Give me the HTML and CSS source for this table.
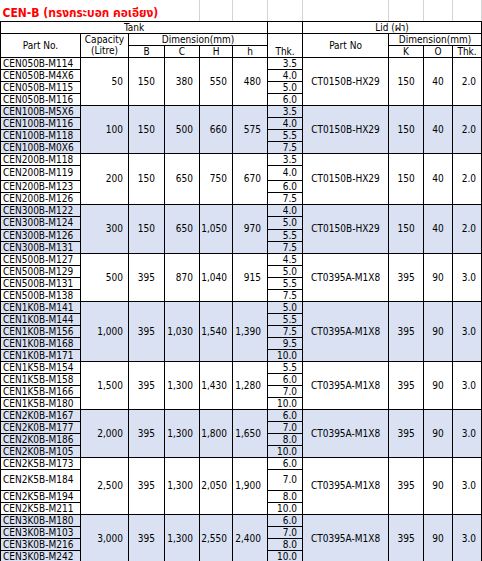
FILE: index.html
```html
<!DOCTYPE html>
<html lang="th">
<head>
<meta charset="utf-8">
<title>CEN-B</title>
<link rel="stylesheet" href="styles.css">
</head>
<body>
<table class="sheet">
<colgroup>
<col class="w-pn"><col class="w-cap"><col class="w-b"><col class="w-c"><col class="w-hh"><col class="w-h2"><col class="w-thk"><col class="w-lpn"><col class="w-k"><col class="w-o"><col class="w-lt">
</colgroup>
<thead>
<tr class="r-title">
<td class="title" colspan="4">CEN-B (ทรงกระบอก คอเอียง)</td>
<td class="grid"></td><td class="grid"></td><td class="grid"></td><td class="grid"></td><td class="grid"></td><td class="grid"></td><td class="grid"></td>
</tr>
<tr class="r12">
<td class="hd" colspan="6">Tank</td>
<td class="hd"></td>
<td class="hd" colspan="4">Lid (ฝา)</td>
</tr>
<tr class="r12">
<td class="hd" rowspan="2">Part No.</td>
<td class="hd" rowspan="2">Capacity<br>(Litre)</td>
<td class="hd" colspan="4">Dimension(mm)</td>
<td class="hd bot" rowspan="2">Thk.</td>
<td class="hd" rowspan="2">Part No</td>
<td class="hd" colspan="3">Dimension(mm)</td>
</tr>
<tr class="r12">
<td class="hd">B</td><td class="hd">C</td><td class="hd">H</td><td class="hd">h</td>
<td class="hd">K</td><td class="hd">O</td><td class="hd">Thk.</td>
</tr>
</thead>

<tbody>
<tr class="r12"><td class="pn">CEN050B-M114</td><td class="cap" rowspan="4">50</td><td class="b" rowspan="4">150</td><td class="c" rowspan="4">380</td><td class="hh" rowspan="4">550</td><td class="h2" rowspan="4">480</td><td class="thk">3.5</td><td class="lpn" rowspan="4">CT0150B-HX29</td><td class="k" rowspan="4">150</td><td class="o" rowspan="4">40</td><td class="lt" rowspan="4">2.0</td></tr>
<tr class="r12"><td class="pn">CEN050B-M4X6</td><td class="thk">4.0</td></tr>
<tr class="r12"><td class="pn">CEN050B-M115</td><td class="thk">5.0</td></tr>
<tr class="r12"><td class="pn">CEN050B-M116</td><td class="thk">6.0</td></tr>
</tbody>

<tbody class="alt">
<tr class="r12"><td class="pn">CEN100B-M5X6</td><td class="cap" rowspan="4">100</td><td class="b" rowspan="4">150</td><td class="c" rowspan="4">500</td><td class="hh" rowspan="4">660</td><td class="h2" rowspan="4">575</td><td class="thk">3.5</td><td class="lpn" rowspan="4">CT0150B-HX29</td><td class="k" rowspan="4">150</td><td class="o" rowspan="4">40</td><td class="lt" rowspan="4">2.0</td></tr>
<tr class="r12"><td class="pn">CEN100B-M116</td><td class="thk">4.0</td></tr>
<tr class="r12"><td class="pn">CEN100B-M118</td><td class="thk">5.5</td></tr>
<tr class="r12"><td class="pn">CEN100B-M0X6</td><td class="thk">7.5</td></tr>
</tbody>

<tbody>
<tr class="r12"><td class="pn">CEN200B-M118</td><td class="cap" rowspan="4">200</td><td class="b" rowspan="4">150</td><td class="c" rowspan="4">650</td><td class="hh" rowspan="4">750</td><td class="h2" rowspan="4">670</td><td class="thk">3.5</td><td class="lpn" rowspan="4">CT0150B-HX29</td><td class="k" rowspan="4">150</td><td class="o" rowspan="4">40</td><td class="lt" rowspan="4">2.0</td></tr>
<tr class="r15"><td class="pn">CEN200B-M119</td><td class="thk">4.0</td></tr>
<tr class="r12"><td class="pn">CEN200B-M123</td><td class="thk">6.0</td></tr>
<tr class="r12"><td class="pn">CEN200B-M126</td><td class="thk">7.5</td></tr>
</tbody>

<tbody class="alt">
<tr class="r12"><td class="pn">CEN300B-M122</td><td class="cap" rowspan="4">300</td><td class="b" rowspan="4">150</td><td class="c" rowspan="4">650</td><td class="hh" rowspan="4">1,050</td><td class="h2" rowspan="4">970</td><td class="thk">4.0</td><td class="lpn" rowspan="4">CT0150B-HX29</td><td class="k" rowspan="4">150</td><td class="o" rowspan="4">40</td><td class="lt" rowspan="4">2.0</td></tr>
<tr class="r13"><td class="pn">CEN300B-M124</td><td class="thk">5.0</td></tr>
<tr class="r12"><td class="pn">CEN300B-M126</td><td class="thk">5.5</td></tr>
<tr class="r12"><td class="pn">CEN300B-M131</td><td class="thk">7.5</td></tr>
</tbody>

<tbody>
<tr class="r12"><td class="pn">CEN500B-M127</td><td class="cap" rowspan="4">500</td><td class="b" rowspan="4">395</td><td class="c" rowspan="4">870</td><td class="hh" rowspan="4">1,040</td><td class="h2" rowspan="4">915</td><td class="thk">4.5</td><td class="lpn" rowspan="4">CT0395A-M1X8</td><td class="k" rowspan="4">395</td><td class="o" rowspan="4">90</td><td class="lt" rowspan="4">3.0</td></tr>
<tr class="r12"><td class="pn">CEN500B-M129</td><td class="thk">5.0</td></tr>
<tr class="r12"><td class="pn">CEN500B-M131</td><td class="thk">5.5</td></tr>
<tr class="r12"><td class="pn">CEN500B-M138</td><td class="thk">7.5</td></tr>
</tbody>

<tbody class="alt">
<tr class="r12"><td class="pn">CEN1K0B-M141</td><td class="cap" rowspan="5">1,000</td><td class="b" rowspan="5">395</td><td class="c" rowspan="5">1,030</td><td class="hh" rowspan="5">1,540</td><td class="h2" rowspan="5">1,390</td><td class="thk">5.0</td><td class="lpn" rowspan="5">CT0395A-M1X8</td><td class="k" rowspan="5">395</td><td class="o" rowspan="5">90</td><td class="lt" rowspan="5">3.0</td></tr>
<tr class="r12"><td class="pn">CEN1K0B-M144</td><td class="thk">5.5</td></tr>
<tr class="r12"><td class="pn">CEN1K0B-M156</td><td class="thk">7.5</td></tr>
<tr class="r12"><td class="pn">CEN1K0B-M168</td><td class="thk">9.5</td></tr>
<tr class="r12"><td class="pn">CEN1K0B-M171</td><td class="thk">10.0</td></tr>
</tbody>

<tbody>
<tr class="r12"><td class="pn">CEN1K5B-M154</td><td class="cap" rowspan="4">1,500</td><td class="b" rowspan="4">395</td><td class="c" rowspan="4">1,300</td><td class="hh" rowspan="4">1,430</td><td class="h2" rowspan="4">1,280</td><td class="thk">5.5</td><td class="lpn" rowspan="4">CT0395A-M1X8</td><td class="k" rowspan="4">395</td><td class="o" rowspan="4">90</td><td class="lt" rowspan="4">3.0</td></tr>
<tr class="r12"><td class="pn">CEN1K5B-M158</td><td class="thk">6.0</td></tr>
<tr class="r12"><td class="pn">CEN1K5B-M166</td><td class="thk">7.0</td></tr>
<tr class="r12"><td class="pn">CEN1K5B-M180</td><td class="thk">10.0</td></tr>
</tbody>

<tbody class="alt">
<tr class="r12"><td class="pn">CEN2K0B-M167</td><td class="cap" rowspan="4">2,000</td><td class="b" rowspan="4">395</td><td class="c" rowspan="4">1,300</td><td class="hh" rowspan="4">1,800</td><td class="h2" rowspan="4">1,650</td><td class="thk">6.0</td><td class="lpn" rowspan="4">CT0395A-M1X8</td><td class="k" rowspan="4">395</td><td class="o" rowspan="4">90</td><td class="lt" rowspan="4">3.0</td></tr>
<tr class="r12"><td class="pn">CEN2K0B-M177</td><td class="thk">7.0</td></tr>
<tr class="r12"><td class="pn">CEN2K0B-M186</td><td class="thk">8.0</td></tr>
<tr class="r12"><td class="pn">CEN2K0B-M105</td><td class="thk">10.0</td></tr>
</tbody>

<tbody>
<tr class="r12"><td class="pn">CEN2K5B-M173</td><td class="cap" rowspan="4">2,500</td><td class="b" rowspan="4">395</td><td class="c" rowspan="4">1,300</td><td class="hh" rowspan="4">2,050</td><td class="h2" rowspan="4">1,900</td><td class="thk">6.0</td><td class="lpn" rowspan="4">CT0395A-M1X8</td><td class="k" rowspan="4">395</td><td class="o" rowspan="4">90</td><td class="lt" rowspan="4">3.0</td></tr>
<tr class="r21"><td class="pn">CEN2K5B-M184</td><td class="thk">7.0</td></tr>
<tr class="r12"><td class="pn">CEN2K5B-M194</td><td class="thk">8.0</td></tr>
<tr class="r11"><td class="pn">CEN2K5B-M211</td><td class="thk">10.0</td></tr>
</tbody>

<tbody class="alt">
<tr class="r12"><td class="pn">CEN3K0B-M180</td><td class="cap" rowspan="4">3,000</td><td class="b" rowspan="4">395</td><td class="c" rowspan="4">1,300</td><td class="hh" rowspan="4">2,550</td><td class="h2" rowspan="4">2,400</td><td class="thk">6.0</td><td class="lpn" rowspan="4">CT0395A-M1X8</td><td class="k" rowspan="4">395</td><td class="o" rowspan="4">90</td><td class="lt" rowspan="4">3.0</td></tr>
<tr class="r12"><td class="pn">CEN3K0B-M103</td><td class="thk">7.0</td></tr>
<tr class="r12"><td class="pn">CEN3K0B-M216</td><td class="thk">8.0</td></tr>
<tr class="r11"><td class="pn">CEN3K0B-M242</td><td class="thk">10.0</td></tr>
</tbody>
</table>
</body>
</html>
```

FILE: styles.css
```css
html, body {
  margin: 0;
  padding: 0;
  background: #ffffff;
}

body {
  font-family: "DejaVu Sans Condensed", "DejaVu Sans", Tahoma, "Noto Sans Thai", sans-serif;
  font-size: 10px;
  color: #000000;
  overflow: hidden;
}

.sheet {
  border-collapse: collapse;
  table-layout: fixed;
  width: 482px;
}

.w-pn { width: 80px; }
.w-cap { width: 48px; }
.w-b { width: 36px; }
.w-c { width: 35px; }
.w-hh { width: 33px; }
.w-h2 { width: 35px; }
.w-thk { width: 35px; }
.w-lpn { width: 86px; }
.w-k { width: 35px; }
.w-o { width: 29px; }
.w-lt { width: 29px; }

.sheet td {
  border: 1px solid #000000;
  padding: 0;
  line-height: 11px;
  white-space: nowrap;
  overflow: hidden;
  vertical-align: middle;
}

.r-title { height: 21px; }
.r11 { height: 11px; }
.r12 { height: 12px; }
.r13 { height: 13px; }
.r15 { height: 15px; }
.r21 { height: 21px; }

.sheet .title {
  border-top: none;
  border-left: none;
  border-right: 1px solid #d4d4d4;
  color: #ff0000;
  font-weight: bold;
  font-size: 12px;
  line-height: 14px;
  padding-left: 2px;
  vertical-align: bottom;
  padding-bottom: 1px;
}

.sheet .grid {
  border-top: none;
  border-left: 1px solid #d4d4d4;
  border-right: 1px solid #d4d4d4;
}

.sheet .hd {
  text-align: center;
}

.sheet .bot {
  vertical-align: bottom;
}

.sheet .alt td {
  background: #d9e1f2;
}

.sheet .pn {
  text-align: left;
  padding-left: 2px;
}

.sheet .cap {
  text-align: right;
  padding-right: 5px;
}

.sheet .b {
  text-align: right;
  padding-right: 9px;
}

.sheet .c {
  text-align: right;
  padding-right: 6px;
}

.sheet .hh {
  text-align: right;
  padding-right: 5px;
}

.sheet .h2 {
  text-align: right;
  padding-right: 6px;
}

.sheet .thk {
  text-align: right;
  padding-right: 5px;
}

.sheet .lpn {
  text-align: center;
}

.sheet .k {
  text-align: center;
}

.sheet .o {
  text-align: center;
}

.sheet .lt {
  text-align: right;
  padding-right: 5px;
}
```
